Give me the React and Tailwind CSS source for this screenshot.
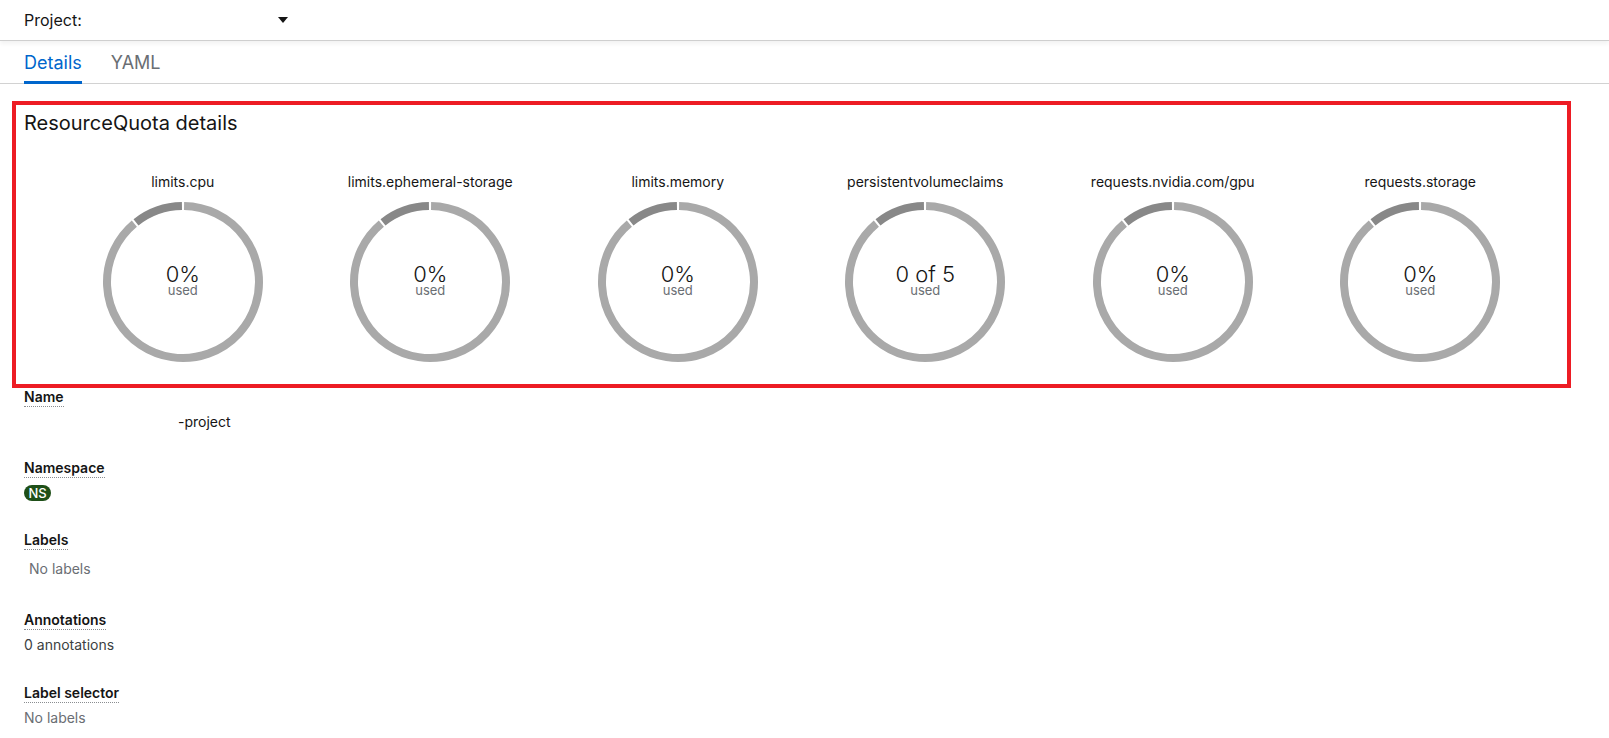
import React from "react";

const quotas = [
  { name: "limits.cpu", value: "0%" },
  { name: "limits.ephemeral-storage", value: "0%" },
  { name: "limits.memory", value: "0%" },
  { name: "persistentvolumeclaims", value: "0 of 5" },
  { name: "requests.nvidia.com/gpu", value: "0%" },
  { name: "requests.storage", value: "0%" },
];

// arc path on a circle, angles in degrees clockwise from 12 o'clock
const arc = (cx, cy, r, a0, a1) => {
  const p = (a) => {
    const rad = ((a - 90) * Math.PI) / 180;
    return [cx + r * Math.cos(rad), cy + r * Math.sin(rad)];
  };
  const [x0, y0] = p(a0);
  const [x1, y1] = p(a1);
  const large = a1 - a0 > 180 ? 1 : 0;
  return `M ${x0} ${y0} A ${r} ${r} 0 ${large} 1 ${x1} ${y1}`;
};

const Donut = ({ value }) => (
  <div className="relative w-[162px] h-[162px] mt-[9px]">
    <svg width="162" height="162" viewBox="0 0 162 162">
      <path d={arc(81, 81, 76, 0.8, 320.2)} fill="none" stroke="#a9a9a9" strokeWidth="8" />
      <path d={arc(81, 81, 76, 321.8, 359.2)} fill="none" stroke="#888888" strokeWidth="8" />
    </svg>
    <div className="absolute inset-0 pb-[3px] flex flex-col items-center justify-center">
      <div className="text-[22px] leading-[20px] font-light text-[#151515]">{value}</div>
      <div className="text-[13px] leading-[13px] text-[#6a6e73]">used</div>
    </div>
  </div>
);

const Term = ({ children }) => (
  <div className="text-[14px] leading-[18px] font-semibold text-[#151515]">
    <span className="inline-block border-b border-dotted border-[#8a8d90]">{children}</span>
  </div>
);

export default function App() {
  return (
    <div className="min-h-screen bg-white text-[#151515]" style={{ fontFamily: "Inter, 'Noto Sans', sans-serif" }}>
      {/* project bar */}
      <div className="h-[41px] flex items-center px-6 border-b border-[#cfcfcf] shadow-[0_3px_4px_rgba(0,0,0,0.05)]">
        <span className="text-[16px]">Project:</span>
        <span className="inline-block w-[196px]" />
        <svg width="10" height="6" viewBox="0 0 10 6">
          <path d="M0 0 L10 0 L5 6 Z" fill="#151515" />
        </svg>
      </div>

      {/* tabs */}
      <div className="h-[43px] flex items-stretch px-6 border-b border-[#d2d2d2]">
        <div className="relative flex items-center text-[18px] text-[#0066cc]">
          Details
          <div className="absolute left-0 right-0 bottom-[-1px] h-[3px] bg-[#0066cc]" />
        </div>
        <div className="flex items-center ml-[29px] text-[18px] text-[#6a6e73]">YAML</div>
      </div>

      {/* quota charts */}
      <div className="ml-[12px] mt-[17px] w-[1559px] border-4 border-[#ed1c24]">
        <h2 className="pl-[8px] pt-[6px] text-[20px] leading-[24px] font-normal text-[#151515]">
          ResourceQuota details
        </h2>
        <div className="ml-[43px] mt-[37px] pb-[21px] w-[1485px] grid grid-cols-6">
          {quotas.map((q) => (
            <div key={q.name} className="flex flex-col items-center">
              <div className="text-[14px] leading-[20px] text-[#151515]">{q.name}</div>
              <Donut value={q.value} />
            </div>
          ))}
        </div>
      </div>

      {/* details list */}
      <div className="pl-6 text-[14px]">
        <Term>Name</Term>
        <div className="mt-[5px] leading-[20px] text-[#151515]">
          <span className="inline-block w-[154px]" />-project
        </div>

        <div className="mt-[27px]">
          <Term>Namespace</Term>
        </div>
        <div className="mt-[7px] flex items-center">
          <span className="inline-flex items-center justify-center h-[16px] w-[27px] rounded-full bg-[#1e4f18] text-white text-[13px] leading-none font-medium">
            NS
          </span>
        </div>

        <div className="mt-[30px]">
          <Term>Labels</Term>
        </div>
        <div className="mt-[9px] pl-[5px] leading-[20px] text-[#6a6e73]">No labels</div>

        <div className="mt-[32px]">
          <Term>Annotations</Term>
        </div>
        <div className="mt-[5px] leading-[20px] text-[#3c3f42]">0 annotations</div>

        <div className="mt-[29px]">
          <Term>Label selector</Term>
        </div>
        <div className="mt-[5px] leading-[20px] text-[#6a6e73]">No labels</div>
      </div>
    </div>
  );
}
